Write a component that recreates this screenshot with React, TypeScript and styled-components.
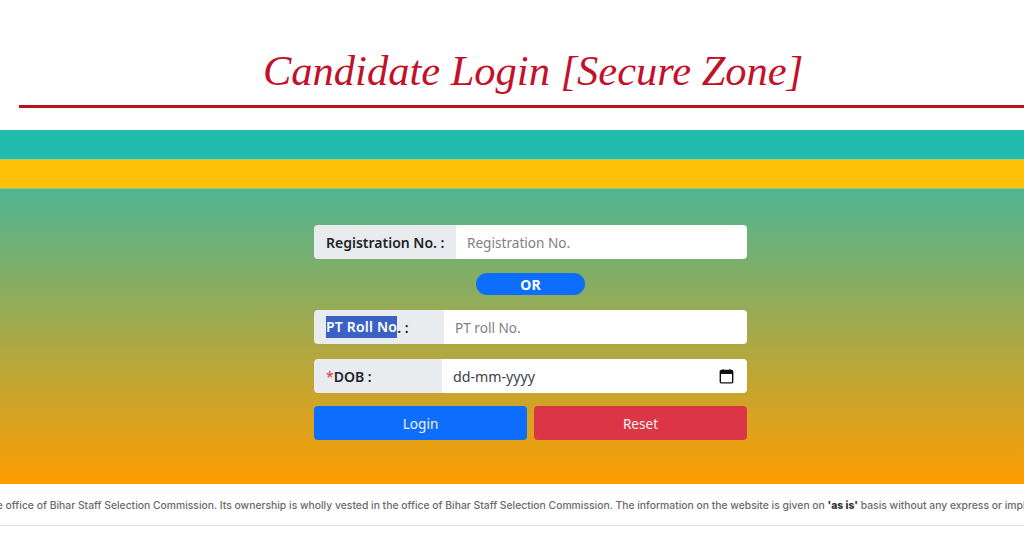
import { createGlobalStyle } from "styled-components";
import styled from "styled-components";

export default function App() {
  return (
    <>
      <GlobalStyle />
      <Header>
        <Title>Candidate Login [Secure Zone]</Title>
      </Header>
      <TealBar />
      <YellowBar />
      <FormSection>
        <Form>
          <InputGroup>
            <Label $width={142}>Registration No. :</Label>
            <Input placeholder="Registration No." />
          </InputGroup>
          <OrPill>OR</OrPill>
          <InputGroup>
            <Label $width={130}>
              <Selected>PT Roll No</Selected>. :
            </Label>
            <Input placeholder="PT roll No." />
          </InputGroup>
          <InputGroup>
            <Label $width={128}>
              <Required>*</Required>DOB :
            </Label>
            <DateField>
              <DateInput readOnly value="dd-mm-yyyy" />
              <CalendarIcon />
            </DateField>
          </InputGroup>
          <Buttons>
            <Button $color="#0d6efd">Login</Button>
            <Button $color="#dc3545">Reset</Button>
          </Buttons>
        </Form>
      </FormSection>
      <Footer>
        <Disclaimer>
          the office of Bihar Staff Selection Commission. Its ownership is wholly vested in the
          office of Bihar Staff Selection Commission. The information on the website is given on{" "}
          <b>'as is'</b> basis without any express or implied warranty.
        </Disclaimer>
      </Footer>
    </>
  );
}

function CalendarIcon() {
  return (
    <svg width="15" height="15" viewBox="0 0 15 15" fill="none">
      <path d="M2.5 1.5h10a1.2 1.2 0 0 1 1.2 1.2v10a1.2 1.2 0 0 1-1.2 1.2h-10a1.2 1.2 0 0 1-1.2-1.2v-10a1.2 1.2 0 0 1 1.2-1.2z" stroke="#111" strokeWidth="1.4" />
      <rect x="1.5" y="2" width="12" height="3" fill="#111" />
      <rect x="3.5" y="0.4" width="1.6" height="2" fill="#111" />
      <rect x="9.9" y="0.4" width="1.6" height="2" fill="#111" />
    </svg>
  );
}

const GlobalStyle = createGlobalStyle`
  * {
    box-sizing: border-box;
  }

  html, body {
    margin: 0;
    height: 100%;
    overflow: hidden;
    background: #fff;
    font-family: "Noto Sans", sans-serif;
  }
`;

const Header = styled.header`
  height: 130px;
  padding: 37px 0 0 19px;
`;

const Title = styled.h1`
  margin: 0;
  height: 71px;
  border-bottom: 3px solid #b8111f;
  padding-left: 244px;
  font-family: "Liberation Serif", serif;
  font-style: italic;
  font-weight: 400;
  font-size: 42.5px;
  line-height: 68px;
  white-space: nowrap;
  color: #c2112a;
`;

const TealBar = styled.div`
  height: 29px;
  background: #21bcae;
`;

const YellowBar = styled.div`
  height: 30px;
  border-top: 1px solid #a8d27c;
  border-bottom: 1px solid #9dc77f;
  background: #ffc107;
`;

const FormSection = styled.main`
  height: 295px;
  padding-top: 36px;
  background: linear-gradient(to bottom, #4fb591, #ff9d00);
`;

const Form = styled.form`
  width: 433px;
  margin-left: 314px;
  display: flex;
  flex-direction: column;
`;

const InputGroup = styled.div`
  height: 34px;
  display: flex;
  border-radius: 4px;
  overflow: hidden;
  margin-bottom: 15px;
`;

const Label = styled.label<{ $width: number }>`
  flex: 0 0 ${(p) => p.$width}px;
  padding-left: 12px;
  display: flex;
  align-items: center;
  font-size: 14px;
  font-weight: 600;
  white-space: pre;
  color: #212529;
  background: #e9ecef;
`;

const Selected = styled.span`
  line-height: 22px;
  letter-spacing: 0.2px;
  color: #fff;
  background: #3a62c5;
`;

const Required = styled.span`
  font-weight: 400;
  color: #dc3545;
`;

const Input = styled.input`
  flex: 1;
  min-width: 0;
  border: 0;
  outline: 0;
  padding: 0 11px;
  font-family: inherit;
  font-size: 13.6px;
  color: #495057;
  background: #fff;

  &::placeholder {
    color: #7b8288;
    opacity: 1;
  }
`;

const DateField = styled.div`
  flex: 1;
  display: flex;
  align-items: center;
  padding-right: 13px;
  background: #fff;
`;

const DateInput = styled(Input)`
  font-size: 14.2px;
  color: #3c4248;
`;

const OrPill = styled.div`
  width: 109px;
  height: 22px;
  margin: -1px 0 15px 162px;
  border-radius: 11px;
  display: flex;
  align-items: center;
  justify-content: center;
  font-size: 14px;
  font-weight: 700;
  color: #fff;
  background: #0d6efd;
`;

const Buttons = styled.div`
  display: flex;
  gap: 7px;
  margin-top: -2px;
`;

const Button = styled.button<{ $color: string }>`
  flex: 1;
  height: 34px;
  border: 0;
  border-radius: 4px;
  font-family: inherit;
  font-size: 13.6px;
  color: #f1f1f1;
  background: ${(p) => p.$color};
`;

const Footer = styled.footer`
  height: 42px;
  border-bottom: 1px solid #dfe3e6;
  display: flex;
  align-items: center;
  overflow: hidden;
`;

const Disclaimer = styled.p`
  margin: 1px 0 0 -13px;
  font-family: Inter, sans-serif;
  font-size: 10.35px;
  font-weight: 500;
  white-space: nowrap;
  color: #6a6a6a;

  b {
    font-weight: 800;
    color: #333;
  }
`;
